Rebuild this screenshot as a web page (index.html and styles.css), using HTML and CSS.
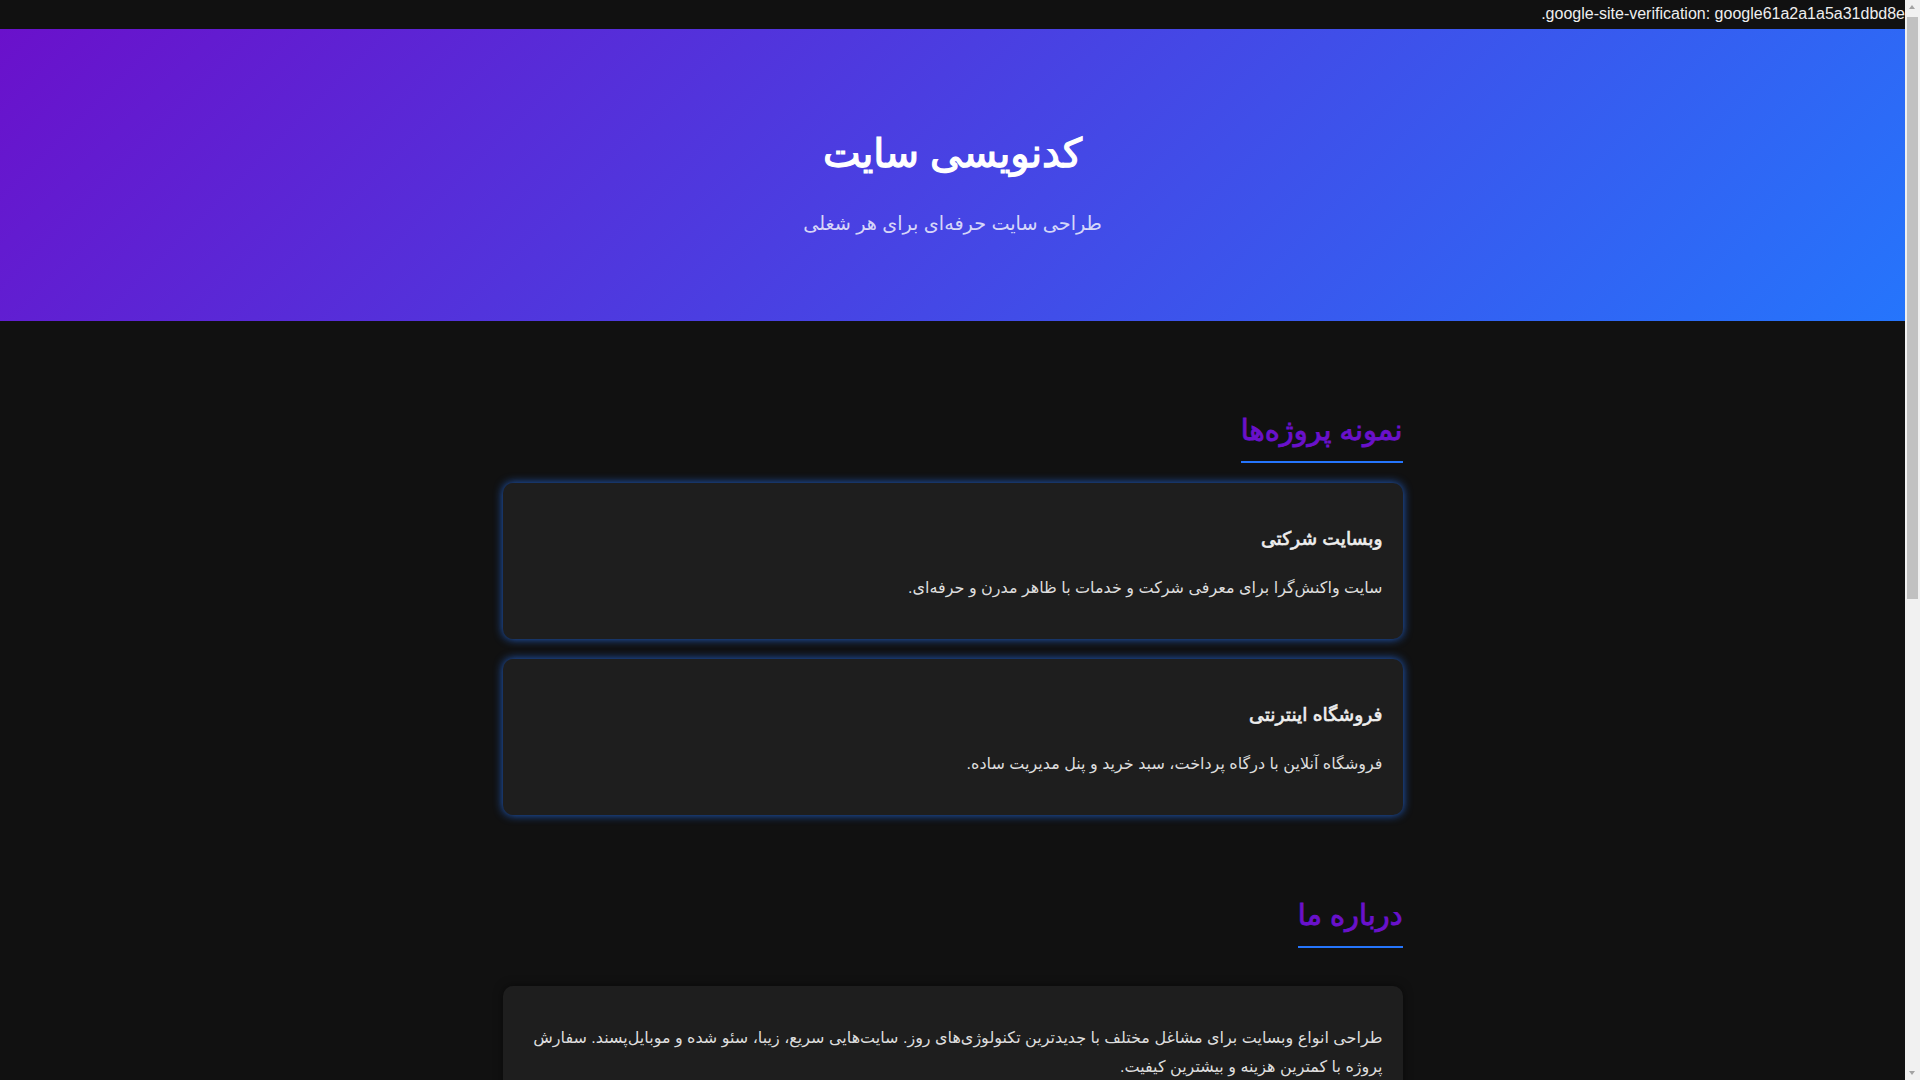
FILE: index.html
```html
<!DOCTYPE html>
<html lang="fa" dir="rtl">
<head>
<meta charset="utf-8">
<title>کدنویسی سایت</title>
<link rel="stylesheet" href="styles.css">
</head>
<body>
<div class="verify">google-site-verification: google61a2a1a5a31dbd8e.</div>
<header class="hero">
  <h1 class="hero-title">کدنویسی سایت</h1>
  <p class="hero-sub">طراحی سایت حرفه‌ای برای هر شغلی</p>
</header>
<main class="container">
  <section class="section">
    <h2 class="section-title">نمونه پروژه‌ها</h2>
    <div class="projects">
      <div class="card glow">
        <h3 class="card-title">وبسایت شرکتی</h3>
        <p class="card-text">سایت واکنش‌گرا برای معرفی شرکت و خدمات با ظاهر مدرن و حرفه‌ای.</p>
      </div>
      <div class="card glow">
        <h3 class="card-title">فروشگاه اینترنتی</h3>
        <p class="card-text">فروشگاه آنلاین با درگاه پرداخت، سبد خرید و پنل مدیریت ساده.</p>
      </div>
    </div>
  </section>
  <section class="section">
    <h2 class="section-title">درباره ما</h2>
    <div class="card about">
      <p class="card-text about-text">طراحی انواع وبسایت برای مشاغل مختلف با جدیدترین تکنولوژی‌های روز. سایت‌هایی سریع، زیبا، سئو شده و موبایل‌پسند. سفارش پروژه با کمترین هزینه و بیشترین کیفیت.</p>
    </div>
  </section>
  <section class="section">
    <h2 class="section-title">تماس با ما</h2>
    <div class="card about">
      <p class="card-text about-text">برای سفارش طراحی سایت با ما در تماس باشید.</p>
    </div>
  </section>
</main>
<div class="scrollbar" aria-hidden="true">
  <div class="sb-btn sb-up"></div>
  <div class="sb-track"><div class="sb-thumb"></div></div>
  <div class="sb-btn sb-down"></div>
</div>
</body>
</html>
```
FILE: styles.css
```css
html, body {
  padding: 0;
}
html {
  margin: 0;
}
body {
  margin: 0 15px 0 0;
  background: #111111;
  color: #eeeeee;
  direction: rtl;
  font-family: "Liberation Sans", "DejaVu Sans", sans-serif;
  font-size: 16px;
  line-height: 1.8;
}
.verify {
  height: 29px;
  line-height: 28.8px;
  white-space: nowrap;
}
.hero {
  background: linear-gradient(135deg, #6a11cb, #2575fc);
  text-align: center;
  padding: 87.5px 20px 79.5px;
  color: #ffffff;
}
.hero-title {
  margin: 0;
  font-size: 40px;
  font-weight: normal;
  line-height: 72px;
  -webkit-text-stroke: 1.25px #ffffff;
}
.hero-sub {
  margin: 18px 0 0;
  font-size: 19.2px;
  line-height: 34.56px;
  color: rgba(255, 255, 255, 0.8);
}
.container {
  max-width: 900px;
  margin: 0 auto;
  padding: 58px 0 40px;
}
.section {
  margin-bottom: 49px;
}
.section-title {
  display: inline-block;
  margin: 26px 0 20px;
  padding-bottom: 6px;
  border-bottom: 2px solid #2575fc;
  color: #6a11cb;
  font-size: 28.8px;
  line-height: 50.4px;
  font-weight: normal;
  -webkit-text-stroke: 0.9px #6a11cb;
}
.projects {
  display: grid;
  gap: 20px;
}
.card {
  background: #1e1e1e;
  border-radius: 10px;
  padding: 20px;
  box-shadow: 0 0 10px rgba(0, 0, 0, 0.5);
}
.glow {
  box-shadow: 0 0 10px rgba(37, 117, 252, 0.8);
}
.about {
  margin-top: 18px;
}
.card-title {
  margin: 18.72px 0;
  font-size: 18.72px;
  font-weight: normal;
  color: #eeeeee;
  -webkit-text-stroke: 0.65px #eeeeee;
}
.card-text {
  margin: 16px 0;
  color: #dddddd;
}
.about-text {
  margin-top: 17.5px;
}
.scrollbar {
  position: fixed;
  top: 0;
  right: 0;
  width: 15px;
  height: 100vh;
  background: #f1f1f1;
  display: flex;
  flex-direction: column;
}
.sb-btn {
  height: 15px;
  flex: none;
  position: relative;
}
.sb-btn::after {
  content: "";
  position: absolute;
  left: 4px;
  width: 0;
  height: 0;
  border-left: 3.5px solid transparent;
  border-right: 3.5px solid transparent;
}
.sb-up::after {
  top: 5px;
  border-bottom: 4px solid #a3a3a3;
}
.sb-down::after {
  top: 6px;
  border-top: 4px solid #a3a3a3;
}
.sb-track {
  flex: 1;
  padding: 2px 2px 0 2px;
}
.sb-thumb {
  height: 582px;
  width: 11px;
  background: #c1c1c1;
}
```
